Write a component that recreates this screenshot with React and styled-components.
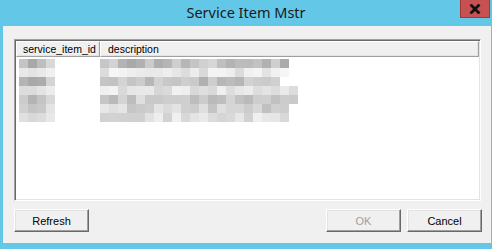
import styled, { createGlobalStyle } from 'styled-components';

const GlobalStyle = createGlobalStyle`
  html, body {
    margin: 0;
    padding: 0;
    background: #63c8e8;
  }
  * {
    box-sizing: border-box;
  }
`;

const Window = styled.div`
  width: 492px;
  height: 249px;
  background: #63c8e8;
  display: flex;
  flex-direction: column;
  overflow: hidden;
`;

const TitleBar = styled.div`
  height: 26px;
  flex-shrink: 0;
  display: grid;
  grid-template-columns: 1fr auto 1fr;
  align-items: start;
`;

const Title = styled.div`
  grid-column: 2;
  padding-top: 3px;
  font-family: 'Noto Sans', 'Open Sans', sans-serif;
  font-size: 14.5px;
  line-height: 18px;
  color: #1a1a1a;
  white-space: nowrap;
`;

const CloseButton = styled.div`
  grid-column: 3;
  justify-self: end;
  margin-right: 2px;
  width: 30px;
  height: 18px;
  background: #c75050;
  border: 1px solid #9e3838;
  border-top: none;
  display: flex;
  align-items: center;
  justify-content: center;
`;

const Client = styled.div`
  height: 217px;
  margin: 0 1px 0 3px;
  background: #f0f0f0;
  padding: 13px 10px 0 11px;
  display: flex;
  flex-direction: column;
`;

const ListBox = styled.div`
  height: 162px;
  background: #fff;
  border-style: solid;
  border-width: 1px;
  border-color: #a0a0a0 #ffffff #ffffff #a0a0a0;
  box-shadow: inset 1px 1px 0 #696969, inset -1px -1px 0 #e3e3e3;
  padding: 1px;
  overflow: hidden;
`;

const Header = styled.div`
  display: flex;
  height: 16px;
  background: #f0f0f0;
`;

const HeaderCell = styled.div`
  width: ${p => (p.$fill ? 'auto' : `${p.$w}px`)};
  flex: ${p => (p.$fill ? '1' : 'none')};
  height: 16px;
  padding-left: ${p => p.$pad || 6}px;
  font-family: 'Liberation Sans', Arial, sans-serif;
  font-size: 10.5px;
  line-height: 14px;
  color: #000;
  border-top: 1px solid #ffffff;
  border-left: 1px solid #ffffff;
  border-right: 1px solid #a0a0a0;
  border-bottom: 1px solid #a0a0a0;
  box-shadow: inset -1px -1px 0 #e3e3e3;
  white-space: nowrap;
`;

const Rows = styled.div`
  padding-top: 2px;
  display: flex;
  flex-direction: column;
`;

const Row = styled.div`
  display: flex;
  height: 9px;
`;

const Col = styled.div`
  display: flex;
  width: ${p => p.$w}px;
  padding-left: ${p => p.$pad}px;
  flex-shrink: 0;
`;

const Block = styled.div`
  width: 9px;
  height: 9px;
  flex-shrink: 0;
`;

const Footer = styled.div`
  display: flex;
  align-items: center;
  margin-top: 8px;
  margin-right: -1px;
`;

const Spacer = styled.div`
  flex: 1;
`;

const Button = styled.div`
  width: 75px;
  height: 23px;
  margin-left: ${p => p.$gap || 0}px;
  background: #f0f0f0;
  border-style: solid;
  border-width: 1px;
  border-color: #ffffff #696969 #696969 #ffffff;
  box-shadow: inset -1px -1px 0 #a0a0a0, inset 1px 1px 0 #e3e3e3;
  display: flex;
  align-items: center;
  justify-content: center;
  font-family: 'Liberation Sans', Arial, sans-serif;
  font-size: 11px;
  color: ${p => (p.$disabled ? '#a0a0a0' : '#000')};
`;

// blurred placeholder rows, grey levels per block
const idRows = [
  [0xc4, 0xa8, 0xbe, 0xd8],
  [0xe8, 0xe3, 0xe8, 0xf0],
  [0xb4, 0xa8, 0xac, 0xd4],
  [0xdc, 0xdc, 0xe4, 0xec],
  [0xcc, 0xb4, 0xc4, 0xd8],
  [0xd0, 0xc4, 0xc8, 0xe4],
  [0xe0, 0xd8, 0xdc, 0xe8],
];

function shades(seed, count, lo, hi) {
  const out = [];
  let s = seed;
  for (let i = 0; i < count; i++) {
    s = (s * 9301 + 49297) % 233280;
    out.push(Math.round(lo + (s / 233280) * (hi - lo)));
  }
  return out;
}

const descRows = [
  shades(11, 21, 0xa4, 0xd8),
  shades(23, 21, 0xd8, 0xf8),
  shades(37, 20, 0xa4, 0xd4),
  shades(41, 22, 0xd4, 0xf4),
  shades(53, 22, 0xb8, 0xe0),
  shades(67, 21, 0xc0, 0xec),
  shades(71, 21, 0xd0, 0xf0),
];

const grey = v => `rgb(${v}, ${v}, ${v})`;

export default function App() {
  return (
    <>
      <GlobalStyle />
      <Window>
        <TitleBar>
          <Title>Service Item Mstr</Title>
          <CloseButton>
            <svg width="12" height="10" viewBox="0 0 12 10">
              <path d="M1.5 0.5 L10.5 9.5 M10.5 0.5 L1.5 9.5" stroke="#111" strokeWidth="2.8" />
            </svg>
          </CloseButton>
        </TitleBar>
        <Client>
          <ListBox>
            <Header>
              <HeaderCell $w={84} $pad={6}>service_item_id</HeaderCell>
              <HeaderCell $fill $pad={7}>description</HeaderCell>
            </Header>
            <Rows>
              {idRows.map((ids, i) => (
                <Row key={i}>
                  <Col $w={84} $pad={3}>
                    {ids.map((v, j) => (
                      <Block key={j} style={{ background: grey(v) }} />
                    ))}
                  </Col>
                  <Col $w={300} $pad={0}>
                    {descRows[i].map((v, j) => (
                      <Block key={j} style={{ background: grey(v) }} />
                    ))}
                  </Col>
                </Row>
              ))}
            </Rows>
          </ListBox>
          <Footer>
            <Button>Refresh</Button>
            <Spacer />
            <Button $disabled>OK</Button>
            <Button $gap={6}>Cancel</Button>
          </Footer>
        </Client>
      </Window>
    </>
  );
}
